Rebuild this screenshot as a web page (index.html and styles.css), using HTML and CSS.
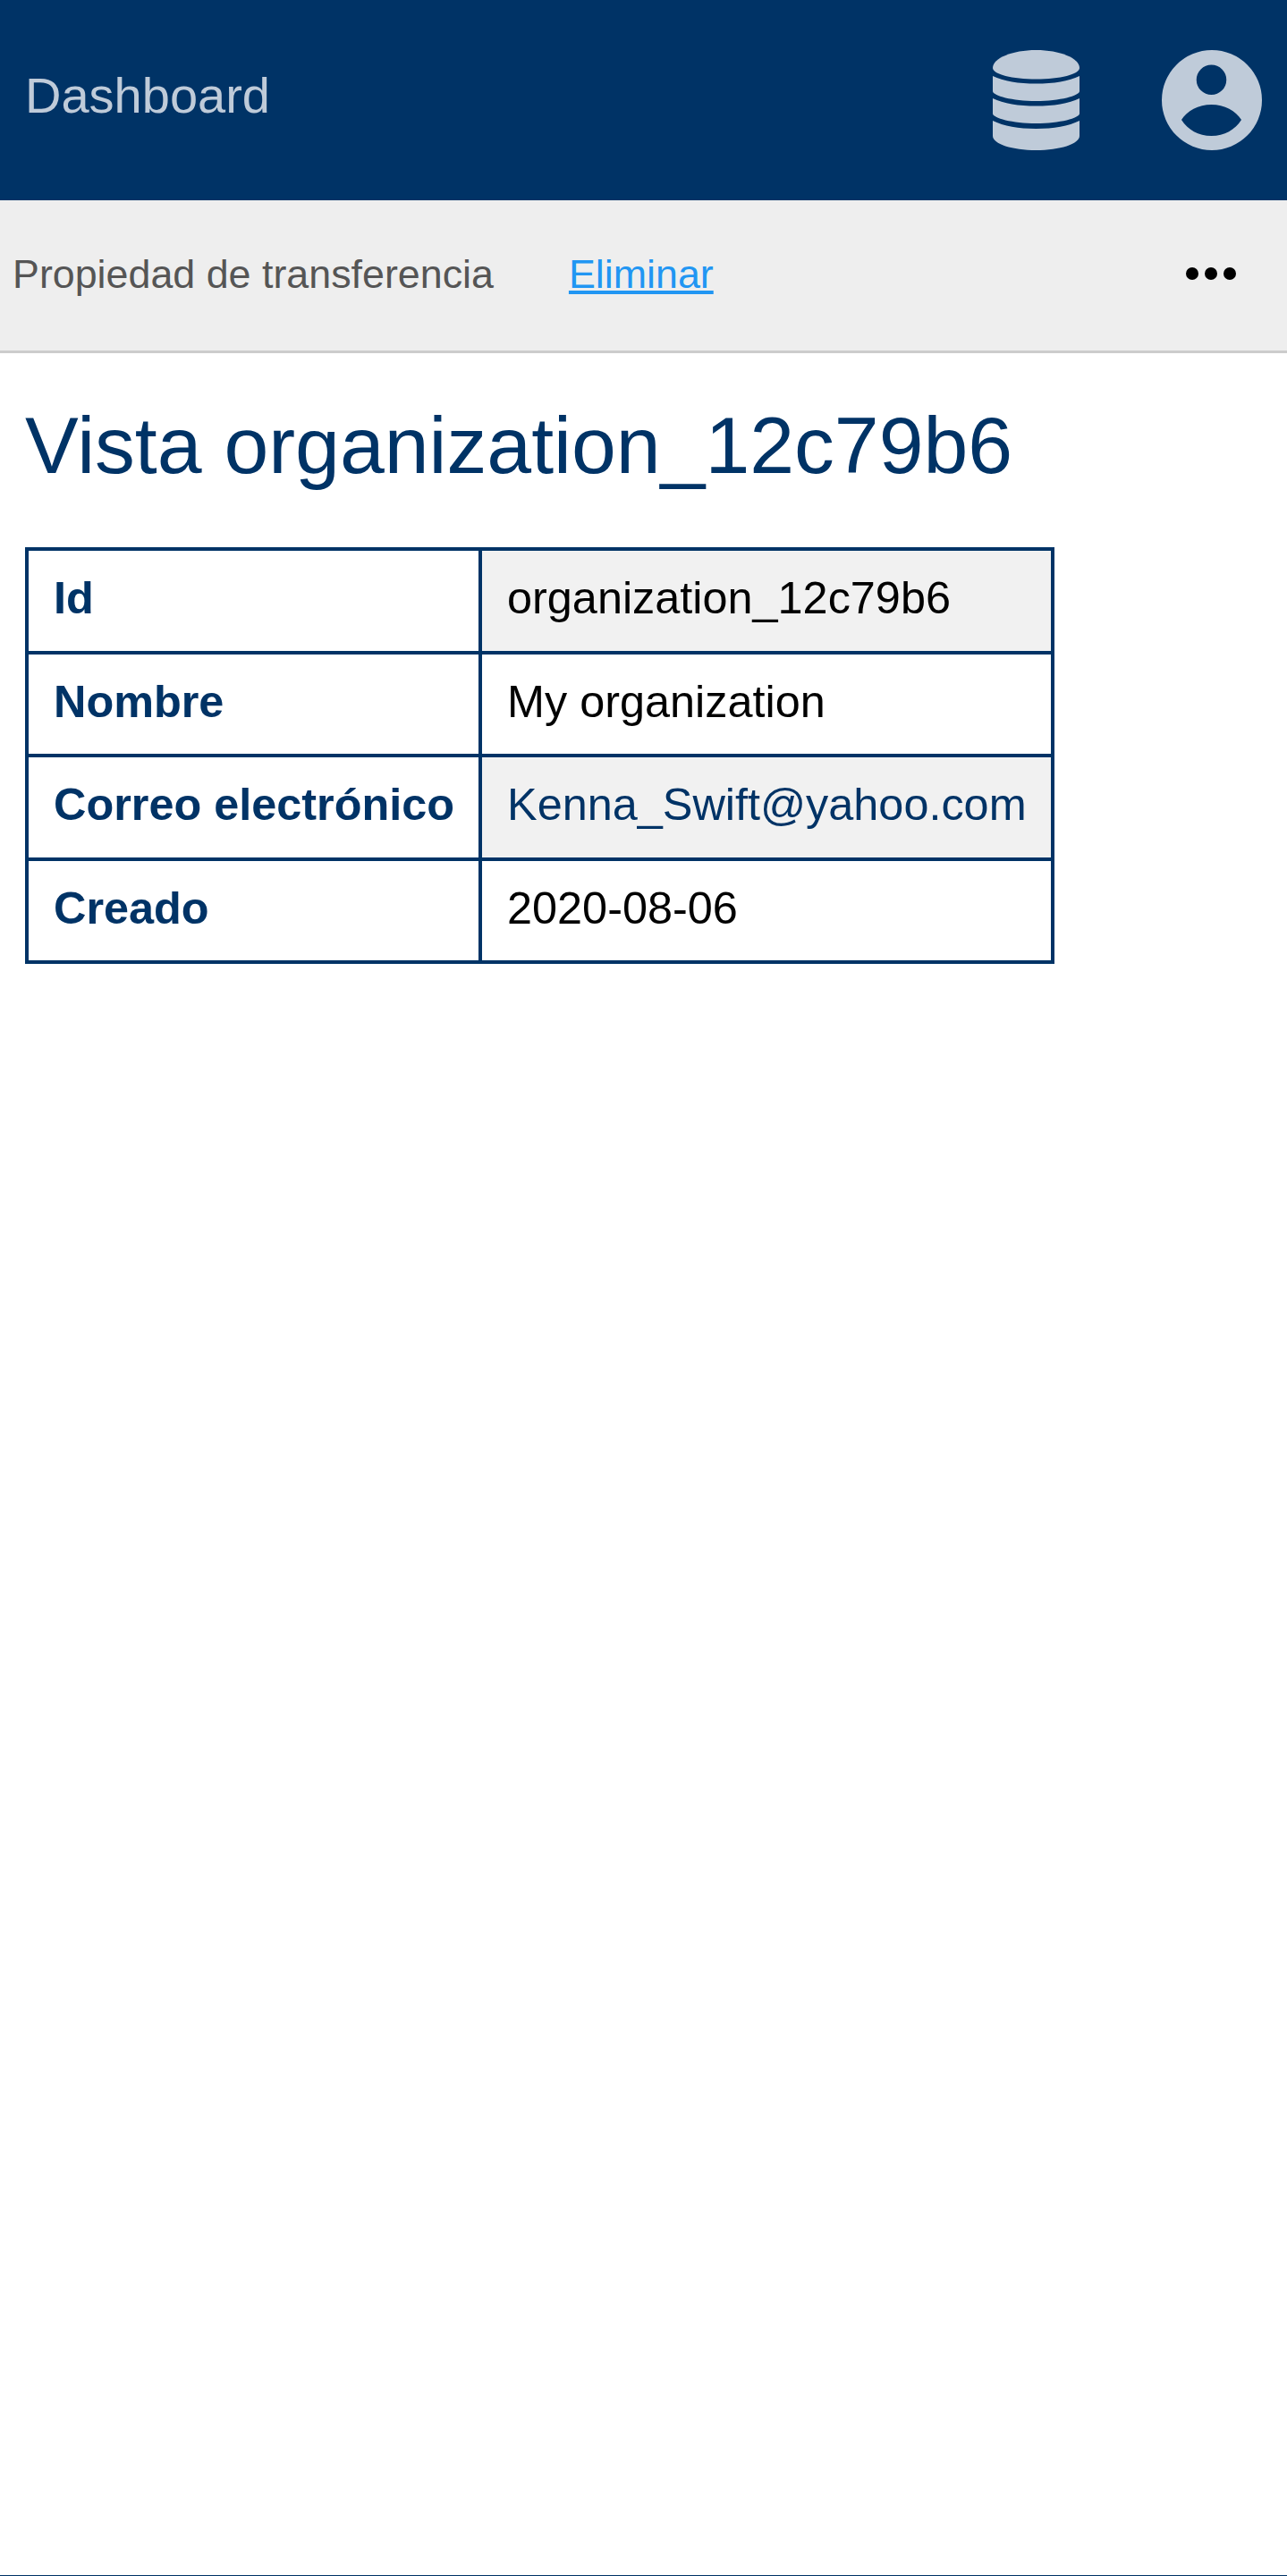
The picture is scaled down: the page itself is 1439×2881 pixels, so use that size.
FILE: index.html
```html
<!DOCTYPE html>
<html lang="es">

<head>
  <meta charset="utf-8">
  <title>Vista organization_12c79b6</title>
  <link rel="stylesheet" href="styles.css">
</head>

<body>
  <div class="page">
    <header class="topbar">
      <a class="brand" href="#">Dashboard</a>
      <nav class="topbar-icons">
        <a class="icon-link" href="#">
          <svg class="icon-db" viewBox="0 0 97 112">
            <path d="M0 20C0 9 22 0 48.500 0S97 9 97 20C97 27 75 32.500 48.500 32.500S0 27 0 20Z" />
            <path d="M0 29C12 35 29 37.500 48.500 37.500S85 35 97 29V46C97 51 75 57 48.500 57S0 51 0 46Z" />
            <path d="M0 54C12 60 29 62.500 48.500 62.500S85 60 97 54V71C97 76 75 82 48.500 82S0 76 0 71Z" />
            <path d="M0 79C12 85 29 88 48.500 88S85 85 97 79V96C97 105 75 112 48.500 112S0 105 0 96Z" />
          </svg>
        </a>
        <a class="icon-link" href="#">
          <svg class="icon-user" viewBox="0 0 112 112">
            <path fill-rule="evenodd" d="M56 0A56 56 0 1 1 56 112A56 56 0 1 1 56 0ZM55.500 16.500A16.700 16.700 0 1 0 55.500 50A16.700 16.700 0 1 0 55.500 16.500ZM22 78C28 68 41 61 55.500 61S83 68 89 78C82 89 70 96 55.500 96S29 89 22 78Z" />
          </svg>
        </a>
      </nav>
    </header>

    <div class="actions">
      <span class="action-text">Propiedad de transferencia</span>
      <a class="action-link" href="#">Eliminar</a>
      <button class="more-btn" type="button">
        <svg class="icon-more" viewBox="0 0 56 14">
          <circle cx="7" cy="7" r="7" />
          <circle cx="28" cy="7" r="7" />
          <circle cx="49" cy="7" r="7" />
        </svg>
      </button>
    </div>

    <main class="content">
      <h1>Vista organization_12c79b6</h1>
      <table class="detail">
        <tr>
          <th>Id</th>
          <td>organization_12c79b6</td>
        </tr>
        <tr>
          <th>Nombre</th>
          <td>My organization</td>
        </tr>
        <tr>
          <th>Correo electrónico</th>
          <td><a href="#">Kenna_Swift@yahoo.com</a></td>
        </tr>
        <tr>
          <th>Creado</th>
          <td>2020-08-06</td>
        </tr>
      </table>
    </main>
  </div>
</body>

</html>
```

FILE: styles.css
```css
body {
  margin: 0;
  font-family: "Liberation Sans", Arial, sans-serif;
  background: #fff;
  color: #000;
}

.page {
  min-height: 100vh;
  box-sizing: border-box;
  border-bottom: 1px solid #003366;
}

.topbar {
  display: flex;
  align-items: center;
  justify-content: space-between;
  height: 224px;
  padding: 0 28px;
  box-sizing: border-box;
  background: #003366;
}

.brand {
  font-size: 56px;
  color: #bfcbd9;
  text-decoration: none;
  margin-top: -12px;
}

.topbar-icons {
  display: flex;
  align-items: center;
  gap: 92px;
}

.icon-link {
  display: flex;
}

.icon-db {
  width: 97px;
  height: 112px;
  fill: #bfcbd9;
}

.icon-user {
  width: 112px;
  height: 112px;
  fill: #bfcbd9;
}

.actions {
  display: flex;
  align-items: center;
  gap: 84px;
  height: 171px;
  padding: 0 57px 4px 14px;
  box-sizing: border-box;
  background: #eeeeee;
  border-bottom: 3px solid #cccccc;
  font-size: 44.800px;
}

.action-text {
  color: #555555;
}

.action-link {
  color: #2196f3;
}

.more-btn {
  display: flex;
  margin-left: auto;
  padding: 0;
  border: none;
  background: none;
}

.icon-more {
  width: 56px;
  height: 14px;
}

.content {
  padding: 0 28px;
}

h1 {
  margin: 52px 0 62px;
  font-size: 89.600px;
  font-weight: normal;
  line-height: 1.15;
  color: #003366;
}

.detail {
  border-collapse: collapse;
  font-size: 50.400px;
}

.detail th,
.detail td {
  height: 105.500px;
  padding: 0 27px 6px 28px;
  border: 4px solid #003366;
  text-align: left;
  white-space: nowrap;
}

.detail th {
  color: #003366;
}

.detail tr:nth-child(odd) td {
  background: #f1f1f1;
}

.detail a {
  color: #003366;
  text-decoration: none;
}
```
